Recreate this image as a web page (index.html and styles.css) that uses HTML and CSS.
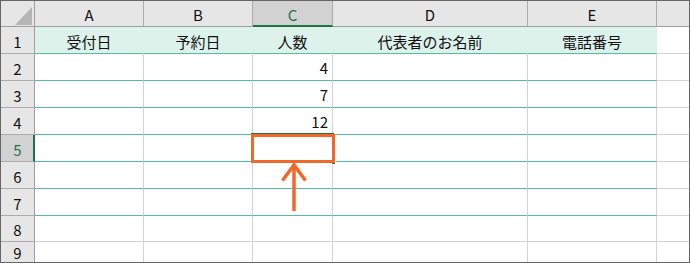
FILE: index.html
```html
<!DOCTYPE html>
<html lang="ja">

<head>
    <meta charset="UTF-8">
    <meta name="viewport" content="width=device-width, initial-scale=1.0">
    <title>予約表</title>
    <link rel="stylesheet" href="styles.css">
</head>

<body>
    <div class="sheet">
        <!-- column headers -->
        <div class="cell corner"><span class="corner-mark"></span></div>
        <div class="cell col-hd">A</div>
        <div class="cell col-hd">B</div>
        <div class="cell col-hd active">C</div>
        <div class="cell col-hd">D</div>
        <div class="cell col-hd">E</div>
        <div class="cell col-hd"></div>

        <!-- row 1: table headings -->
        <div class="cell row-hd">1</div>
        <div class="cell title">受付日</div>
        <div class="cell title">予約日</div>
        <div class="cell title">人数</div>
        <div class="cell title">代表者のお名前</div>
        <div class="cell title">電話番号</div>
        <div class="cell"></div>

        <div class="cell row-hd">2</div>
        <div class="cell band"></div>
        <div class="cell band"></div>
        <div class="cell band num">4</div>
        <div class="cell band"></div>
        <div class="cell band"></div>
        <div class="cell"></div>

        <div class="cell row-hd">3</div>
        <div class="cell band"></div>
        <div class="cell band"></div>
        <div class="cell band num">7</div>
        <div class="cell band"></div>
        <div class="cell band"></div>
        <div class="cell"></div>

        <div class="cell row-hd">4</div>
        <div class="cell band"></div>
        <div class="cell band"></div>
        <div class="cell band num">12</div>
        <div class="cell band"></div>
        <div class="cell band"></div>
        <div class="cell"></div>

        <div class="cell row-hd active">5</div>
        <div class="cell band"></div>
        <div class="cell band"></div>
        <div class="cell band"></div>
        <div class="cell band"></div>
        <div class="cell band"></div>
        <div class="cell"></div>

        <div class="cell row-hd">6</div>
        <div class="cell band"></div>
        <div class="cell band"></div>
        <div class="cell band"></div>
        <div class="cell band"></div>
        <div class="cell band"></div>
        <div class="cell"></div>

        <div class="cell row-hd">7</div>
        <div class="cell band"></div>
        <div class="cell band"></div>
        <div class="cell band"></div>
        <div class="cell band"></div>
        <div class="cell band"></div>
        <div class="cell"></div>

        <div class="cell row-hd">8</div>
        <div class="cell"></div>
        <div class="cell"></div>
        <div class="cell"></div>
        <div class="cell"></div>
        <div class="cell"></div>
        <div class="cell"></div>

        <div class="cell row-hd last">9</div>
        <div class="cell last"></div>
        <div class="cell last"></div>
        <div class="cell last"></div>
        <div class="cell last"></div>
        <div class="cell last"></div>
        <div class="cell last"></div>

        <!-- active cell C5 -->
        <div class="cursor"><span class="fill-handle"></span></div>
        <div class="highlight"></div>
    </div>

    <!-- pointer up to C5 -->
    <svg class="arrow" width="690" height="263" viewBox="0 0 690 263">
        <path d="M294 166 V211" />
        <path d="M282.5 180.5 L294 165 L305.5 180.5" />
    </svg>
</body>

</html>
```

FILE: styles.css
```css
body {
    margin: 0;
    padding: 0;
    background: white;
    font-family: "Noto Sans CJK JP", "Noto Sans", sans-serif;
    color: #111;
}

.sheet {
    position: relative;
    box-sizing: border-box;
    width: 690px;
    height: 263px;
    overflow: hidden;
    border: 1px solid #666;
    display: grid;
    grid-template-columns: 34px 109px 109px 80px 195px 129px 32px;
    grid-template-rows: 26px repeat(7, 27px) 26px 20px;
}

.cell {
    box-sizing: border-box;
    border-right: 1px solid #d4d4d4;
    border-bottom: 1px solid #d4d4d4;
    display: flex;
    align-items: center;
    justify-content: center;
    font-size: 15px;
    line-height: 1;
}

.cell:nth-child(7n) {
    border-right: none;
}

/* the 9th row is cut by the frame */
.cell.last {
    border-bottom: none;
    padding-top: 0;
}

/* headers */
.corner,
.col-hd,
.row-hd {
    background: #e6e6e6;
    border-right-color: #ababab;
    border-bottom-color: #ababab;
}

.corner {
    align-items: flex-end;
    justify-content: flex-end;
    padding: 0 2px 1px 0;
    border-bottom-color: #9e9e9e;
    border-right-color: #9e9e9e;
}

.corner-mark {
    width: 17px;
    height: 18px;
    background: #b5b5b5;
    clip-path: polygon(100% 0, 100% 100%, 0 100%);
}

.col-hd {
    border-bottom-color: #9e9e9e;
    padding-top: 1px;
}

.row-hd {
    border-right-color: #9e9e9e;
    padding-top: 2px;
}

.col-hd.active {
    background: #d2d2d2;
    color: #217346;
    border-bottom: 2px solid #217346;
    padding-top: 2px;
}

.row-hd.active {
    background: #d2d2d2;
    color: #217346;
    border-right: 2px solid #217346;
    padding-left: 1px;
}

/* table */
.title {
    background: #dcf2eb;
    border-right-color: #dcf2eb;
    border-bottom-color: #52bf9f;
    padding-top: 2px;
}

.band {
    border-bottom-color: #52bf9f;
}

.num {
    justify-content: flex-end;
    padding: 1px 4px 0 0;
}

/* selection */
.cursor {
    position: absolute;
    left: 250px;
    top: 132px;
    width: 83px;
    height: 30px;
    box-sizing: border-box;
    border: 2px solid #217346;
}

.fill-handle {
    position: absolute;
    right: -4px;
    bottom: -4px;
    width: 5px;
    height: 5px;
    background: #217346;
    border: 1px solid white;
    box-sizing: border-box;
}

.highlight {
    position: absolute;
    left: 250px;
    top: 133px;
    width: 84px;
    height: 29px;
    box-sizing: border-box;
    border: 3px solid #f2672a;
}

.arrow {
    position: absolute;
    left: 0;
    top: 0;
    pointer-events: none;
}

.arrow path {
    fill: none;
    stroke: #f2672a;
    stroke-width: 3.5;
}
```
